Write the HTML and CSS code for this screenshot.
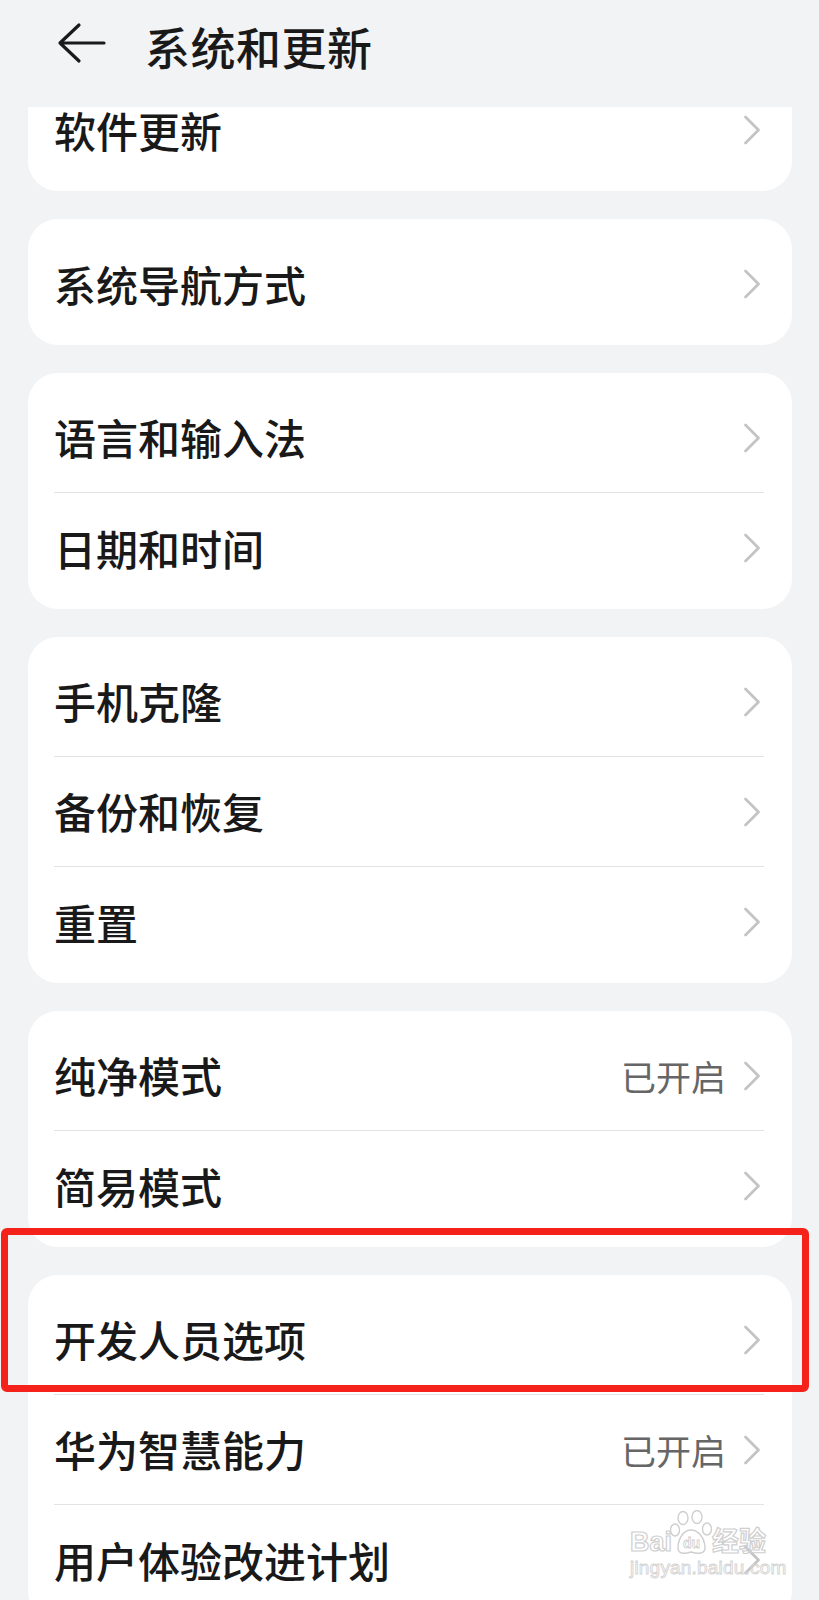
FILE: index.html
```html
<!DOCTYPE html>
<html lang="zh-CN">
<head>
  <meta charset="UTF-8">
  <meta name="viewport" content="width=device-width, initial-scale=1.0">
  <title>系统和更新</title>
  <link rel="stylesheet" href="styles.css">
</head>
<body>
  <div class="header">
    <svg class="back-icon" width="50" height="44" viewBox="0 0 50 44">
      <path d="M22 3 L3 21 L22 39 M3 21 L47 21" fill="none" stroke="#1a1a1a" stroke-width="3.2" stroke-linecap="round" stroke-linejoin="round"/>
    </svg>
    <h1 class="page-title">系统和更新</h1>
  </div>

  <div class="scroll">
    <div class="list">
      <div class="card">
        <div class="row">
          <span class="label">软件更新</span>
          <svg class="chevron" width="18" height="30" viewBox="0 0 18 30"><path d="M2.5 2 L15.5 15 L2.5 28"/></svg>
        </div>
      </div>

      <div class="card">
        <div class="row">
          <span class="label">系统导航方式</span>
          <svg class="chevron" width="18" height="30" viewBox="0 0 18 30"><path d="M2.5 2 L15.5 15 L2.5 28"/></svg>
        </div>
      </div>

      <div class="card">
        <div class="row">
          <span class="label">语言和输入法</span>
          <svg class="chevron" width="18" height="30" viewBox="0 0 18 30"><path d="M2.5 2 L15.5 15 L2.5 28"/></svg>
        </div>
        <div class="row">
          <span class="label">日期和时间</span>
          <svg class="chevron" width="18" height="30" viewBox="0 0 18 30"><path d="M2.5 2 L15.5 15 L2.5 28"/></svg>
        </div>
      </div>

      <div class="card">
        <div class="row">
          <span class="label">手机克隆</span>
          <svg class="chevron" width="18" height="30" viewBox="0 0 18 30"><path d="M2.5 2 L15.5 15 L2.5 28"/></svg>
        </div>
        <div class="row">
          <span class="label">备份和恢复</span>
          <svg class="chevron" width="18" height="30" viewBox="0 0 18 30"><path d="M2.5 2 L15.5 15 L2.5 28"/></svg>
        </div>
        <div class="row">
          <span class="label">重置</span>
          <svg class="chevron" width="18" height="30" viewBox="0 0 18 30"><path d="M2.5 2 L15.5 15 L2.5 28"/></svg>
        </div>
      </div>

      <div class="card">
        <div class="row">
          <span class="label">纯净模式</span>
          <span class="value">已开启</span>
          <svg class="chevron" width="18" height="30" viewBox="0 0 18 30"><path d="M2.5 2 L15.5 15 L2.5 28"/></svg>
        </div>
        <div class="row">
          <span class="label">简易模式</span>
          <svg class="chevron" width="18" height="30" viewBox="0 0 18 30"><path d="M2.5 2 L15.5 15 L2.5 28"/></svg>
        </div>
      </div>

      <div class="card">
        <div class="row">
          <span class="label">开发人员选项</span>
          <svg class="chevron" width="18" height="30" viewBox="0 0 18 30"><path d="M2.5 2 L15.5 15 L2.5 28"/></svg>
        </div>
        <div class="row">
          <span class="label">华为智慧能力</span>
          <span class="value">已开启</span>
          <svg class="chevron" width="18" height="30" viewBox="0 0 18 30"><path d="M2.5 2 L15.5 15 L2.5 28"/></svg>
        </div>
        <div class="row">
          <span class="label">用户体验改进计划</span>
          <svg class="chevron" width="18" height="30" viewBox="0 0 18 30"><path d="M2.5 2 L15.5 15 L2.5 28"/></svg>
        </div>
      </div>
    </div>
  </div>

  <!-- annotation and watermark drawn over the screenshot -->
  <div class="highlight-box"></div>

  <div class="watermark">
    <div class="wm-line">
      <span class="wm-text">Bai</span>
      <span class="wm-paw">
        <svg width="44" height="46" viewBox="0 0 44 46">
          <g fill="none" stroke="#cfcfcf" stroke-width="1.4">
            <ellipse cx="13" cy="8" rx="5" ry="6.5"/>
            <ellipse cx="27" cy="7" rx="5" ry="6.5"/>
            <ellipse cx="5" cy="20" rx="4.5" ry="6"/>
            <ellipse cx="37" cy="19" rx="4.5" ry="6"/>
            <path d="M8 38 C8 28 14 20 21 20 C28 20 35 28 35 38 C35 44 28 44 21 42 C14 44 8 44 8 38 Z"/>
          </g>
          <text x="21.5" y="38" text-anchor="middle" class="wm-du">du</text>
        </svg>
      </span>
      <span class="wm-text">经验</span>
    </div>
    <div class="wm-url">jingyan.baidu.com</div>
  </div>
</body>
</html>
```

FILE: styles.css
```css
/* Settings page: system and updates */
html, body {
  margin: 0;
  padding: 0;
}
body {
  width: 819px;
  height: 1600px;
  overflow: hidden;
  position: relative;
  background-color: #f1f3f5;
  font-family: "Noto Sans CJK SC", "Noto Sans", sans-serif;
  color: #191919;
}

.header {
  height: 107px;
  box-sizing: border-box;
  padding: 0 0 14px 57px;
  display: flex;
  align-items: center;
}
.back-icon {
  display: block;
  margin-top: -5px;
}
.page-title {
  margin: 0 0 0 38px;
  font-size: 45px;
  font-weight: 500;
  line-height: 1;
  letter-spacing: 0.5px;
}

.scroll {
  height: 1493px;
  overflow: hidden;
}
.list {
  margin-top: -42px;
  display: flex;
  flex-direction: column;
  gap: 28px;
}

.card {
  margin: 0 27px 0 28px;
  padding: 10px 28px 6px 26px;
  background-color: #fff;
  border-radius: 30px;
}
.row {
  height: 110px;
  box-sizing: border-box;
  display: flex;
  align-items: center;
  border-bottom: 1px solid #e3e3e3;
}
.row:last-child {
  border-bottom: none;
}
.label {
  flex: 1;
  font-size: 42px;
  font-weight: 500;
  line-height: 1;
  padding-bottom: 1px;
}
.value {
  font-size: 35px;
  color: #666;
  line-height: 1;
}
.chevron {
  display: block;
  margin: 0 3px 0 17px;
}
.chevron path {
  fill: none;
  stroke: #c4c4c4;
  stroke-width: 2.8;
  stroke-linecap: round;
  stroke-linejoin: round;
}

.highlight-box {
  position: absolute;
  left: 1px;
  top: 1228px;
  width: 808px;
  height: 164px;
  box-sizing: border-box;
  border: 7px solid #f5221b;
  border-radius: 6px;
}

.watermark {
  position: absolute;
  left: 630px;
  top: 1510px;
  width: 145px;
  color: transparent;
}
.wm-line {
  display: flex;
  align-items: flex-end;
  height: 46px;
}
.wm-text {
  font-family: "Liberation Sans", "Noto Sans CJK SC", sans-serif;
  font-size: 27px;
  font-weight: 700;
  line-height: 1;
  -webkit-text-stroke: 1.2px #cfcfcf;
}
.wm-paw svg {
  display: block;
  margin: 0 -2px;
}
.wm-du {
  font-family: "Liberation Sans", sans-serif;
  font-size: 14px;
  font-weight: 700;
  fill: none;
  stroke: #cfcfcf;
  stroke-width: 0.8;
}
.wm-url {
  font-family: "Liberation Sans", sans-serif;
  font-size: 19px;
  line-height: 24px;
  -webkit-text-stroke: 0.9px #d4d4d4;
  letter-spacing: 0.2px;
}
```
